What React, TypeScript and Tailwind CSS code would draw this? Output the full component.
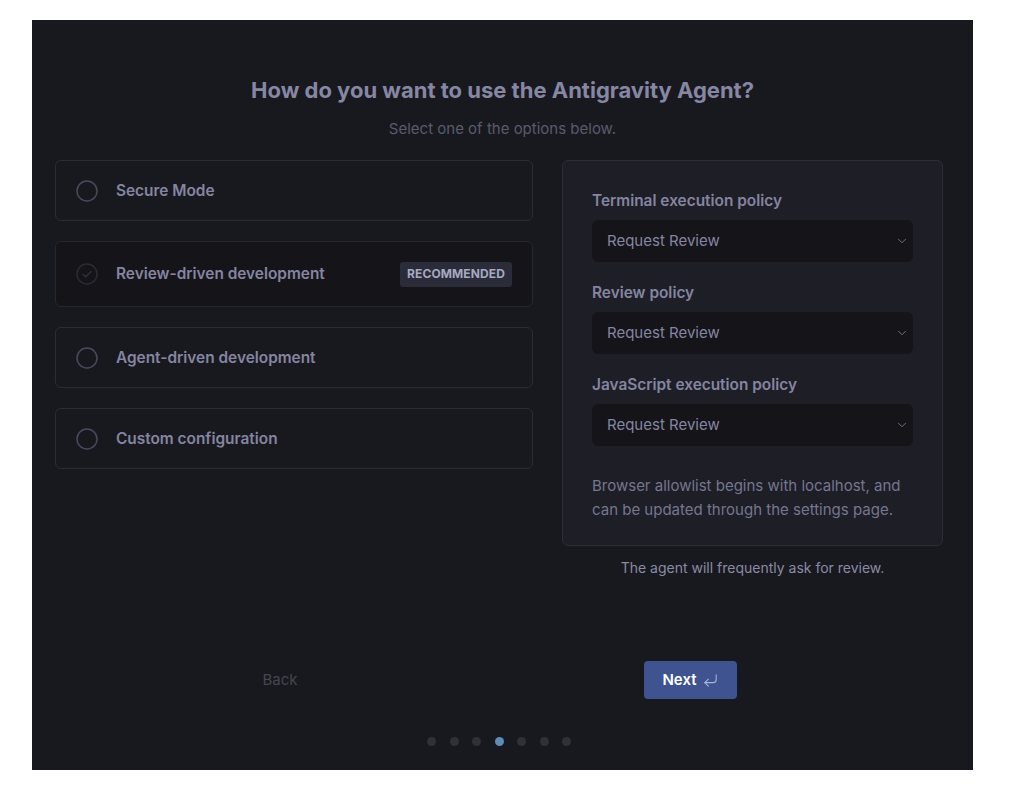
import { ChevronDown, CornerDownLeft } from 'lucide-react'

const options = [
  { label: 'Secure Mode' },
  { label: 'Review-driven development', selected: true, badge: 'RECOMMENDED' },
  { label: 'Agent-driven development' },
  { label: 'Custom configuration' },
]

const policies = ['Terminal execution policy', 'Review policy', 'JavaScript execution policy']

function Radio({ checked }: { checked?: boolean }) {
  if (checked) {
    return (
      <svg width="22" height="22" viewBox="0 0 22 22" fill="none" className="shrink-0">
        <circle cx="11" cy="11" r="10" stroke="#2a2b36" strokeWidth="1.5" />
        <path d="M7 11.3l2.6 2.6L15 8.6" stroke="#2e2f3a" strokeWidth="1.5" strokeLinecap="round" strokeLinejoin="round" />
      </svg>
    )
  }
  return (
    <svg width="22" height="22" viewBox="0 0 22 22" fill="none" className="shrink-0">
      <circle cx="11" cy="11" r="10" stroke="#484a5c" strokeWidth="1.5" />
    </svg>
  )
}

export default function App() {
  return (
    <div className="min-h-screen bg-white pt-[20px] pl-[32px] font-['Inter',sans-serif]">
      <div className="w-[941px] h-[750px] bg-[#18191e] flex flex-col">
        <div className="pt-[55px] text-center">
          <h1 className="text-[22px] leading-[30px] font-bold text-[#8787a4]">
            How do you want to use the Antigravity Agent?
          </h1>
          <p className="mt-[14px] text-[15px] leading-5 text-[#5a5b6c]">Select one of the options below.</p>
        </div>

        <div className="mt-[21px] flex pl-[23px] pr-[30px] gap-[29px]">
          <div className="w-[478px] flex flex-col gap-5">
            {options.map((o) => (
              <div
                key={o.label}
                className={`flex items-center rounded-md border px-5 ${
                  o.selected ? 'h-[66px] bg-[#141419] border-[#26272e]' : 'h-[61px] border-[#2b2c34]'
                }`}
              >
                <Radio checked={o.selected} />
                <span className="ml-[18px] text-[15.4px] font-semibold text-[#8585a1]">{o.label}</span>
                {o.badge && (
                  <span className="ml-auto h-[25px] flex items-center px-[7px] rounded-[3px] bg-[#2a2c3a] text-[12px] font-bold tracking-[0.01em] text-[#a6a9c0]">
                    {o.badge}
                  </span>
                )}
              </div>
            ))}
          </div>

          <div className="w-[381px] flex flex-col">
            <div className="rounded-md border border-[#2c2d37] bg-[#1d1e26] px-[29px] pt-[30px] pb-[23px]">
              {policies.map((p) => (
                <div key={p} className="mb-[21px]">
                  <div className="text-[15.4px] leading-[20px] font-semibold text-[#8585a1]">{p}</div>
                  <div className="mt-[9px] h-[42px] rounded-md bg-[#141419] flex items-center pl-[15px] pr-[4px]">
                    <span className="text-[15px] text-[#8585a1]">Request Review</span>
                    <ChevronDown size={14} strokeWidth={1.5} className="ml-auto text-[#7c7d94]" />
                  </div>
                </div>
              ))}
              <p className="pt-[7px] text-[15px] leading-[24px] text-[#75768f]">
                Browser allowlist begins with localhost, and can be updated through the settings page.
              </p>
            </div>
            <p className="mt-[12px] text-center text-sm leading-5 text-[#8a8ba2]">
              The agent will frequently ask for review.
            </p>
          </div>
        </div>

        <div className="mt-auto pb-[24px] flex flex-col items-center">
          <div className="w-full flex items-center">
            <button className="ml-[188px] w-[120px] h-[38px] text-[15px] text-[#45464f]">Back</button>
            <button className="ml-[304px] w-[93px] h-[38px] rounded-[4px] bg-[#3e5390] flex items-center justify-center gap-[5px] text-[15px] font-semibold text-white">
              Next
              <CornerDownLeft size={17} strokeWidth={1.5} className="text-[#aab4d6]" />
            </button>
          </div>
          <div className="mt-[38px] mr-[7px] flex items-center gap-[13.5px]">
            {[0, 1, 2, 3, 4, 5, 6].map((i) => (
              <span
                key={i}
                className={`w-[9px] h-[9px] rounded-full ${i === 3 ? 'bg-[#5f8cb6]' : 'bg-[#2f3038]'}`}
              />
            ))}
          </div>
        </div>
      </div>
    </div>
  )
}
